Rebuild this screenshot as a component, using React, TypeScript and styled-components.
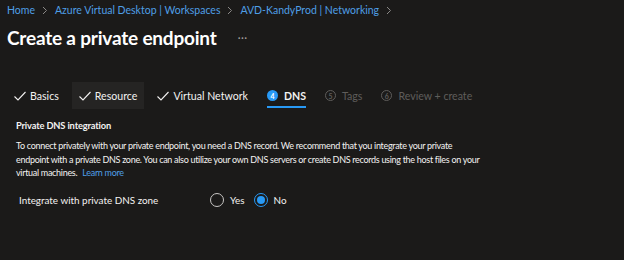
import React from 'react';
import styled, { createGlobalStyle } from 'styled-components';

const GlobalStyle = createGlobalStyle`
  html, body {
    margin: 0;
    padding: 0;
    background: #1b1a19;
  }
  body {
    font-family: Lato, "Noto Sans", sans-serif;
    color: #f3f2f1;
  }
`;

const Page = styled.div`
  width: 624px;
  height: 260px;
  background: #1b1a19;
  overflow: hidden;
`;

const Breadcrumb = styled.nav`
  display: flex;
  align-items: center;
  gap: 6px;
  padding: 2px 0 0 7px;
  height: 16px;
  font-size: 10.5px;
`;

const Crumb = styled.a`
  color: #4f9fe6;
  text-decoration: none;
`;

const Chevron = styled.span`
  display: flex;
  padding: 0 1px;
`;

const TitleRow = styled.div`
  display: flex;
  align-items: center;
  gap: 21px;
  padding: 6px 0 0 7px;
  height: 26px;
`;

const Title = styled.h1`
  margin: 0;
  font-size: 19px;
  font-weight: 700;
  letter-spacing: -0.2px;
  color: #ffffff;
`;

const More = styled.span`
  color: #a19f9d;
  font-size: 11px;
  letter-spacing: 0.5px;
`;

const Tabs = styled.div`
  display: flex;
  align-items: stretch;
  margin-top: 32px;
  padding-left: 7px;
  height: 27px;
`;

const Tab = styled.div<{ $hover?: boolean; $active?: boolean; $disabled?: boolean }>`
  display: flex;
  align-items: center;
  gap: 3px;
  padding: 0 7px 0 6px;
  margin-right: 6px;
  font-size: 10.6px;
  font-weight: ${p => (p.$active ? 700 : 400)};
  color: ${p => (p.$disabled ? '#5f5d5b' : '#f3f2f1')};
  background: ${p => (p.$hover ? '#252423' : 'transparent')};
  position: relative;
  &::after {
    content: "";
    display: ${p => (p.$active ? 'block' : 'none')};
    position: absolute;
    left: 6px;
    right: 7px;
    bottom: 1px;
    height: 2px;
    background: #2899f5;
  }
`;

const StepBadge = styled.span<{ $active?: boolean }>`
  width: 11px;
  height: 11px;
  border-radius: 50%;
  display: inline-flex;
  align-items: center;
  justify-content: center;
  font-size: 7px;
  font-weight: 700;
  box-sizing: border-box;
  color: ${p => (p.$active ? '#ffffff' : '#5f5d5b')};
  background: ${p => (p.$active ? '#2899f5' : 'transparent')};
  border: ${p => (p.$active ? 'none' : '1px solid #5f5d5b')};
  margin-right: 3px;
`;

const Section = styled.section`
  padding: 11px 0 0 16px;
`;

const SectionTitle = styled.h2`
  margin: 0;
  font-size: 9.3px;
  font-weight: 700;
  letter-spacing: -0.15px;
  color: #f3f2f1;
`;

const Description = styled.p`
  margin: 8px 0 0;
  font-size: 9px;
  letter-spacing: -0.3px;
  line-height: 13.5px;
  color: #f3f2f1;
`;

const Line = styled.span`
  display: block;
  white-space: nowrap;
`;

const LearnMore = styled.a`
  color: #4f9fe6;
  text-decoration: none;
  margin-left: 5px;
`;

const FieldRow = styled.div`
  display: flex;
  align-items: center;
  margin-top: 13px;
  padding-left: 3px;
`;

const FieldLabel = styled.label`
  width: 191px;
  font-size: 9.9px;
  color: #f3f2f1;
`;

const RadioGroup = styled.div`
  display: flex;
  align-items: center;
  gap: 9px;
`;

const RadioOption = styled.label`
  display: flex;
  align-items: center;
  gap: 6px;
  font-size: 9.9px;
  color: #f3f2f1;
`;

const RadioCircle = styled.span<{ $checked?: boolean }>`
  width: 14px;
  height: 14px;
  border-radius: 50%;
  box-sizing: border-box;
  border: 1px solid ${p => (p.$checked ? '#2899f5' : '#c8c6c4')};
  display: inline-flex;
  align-items: center;
  justify-content: center;
  &::after {
    content: "";
    display: ${p => (p.$checked ? 'block' : 'none')};
    width: 8px;
    height: 8px;
    border-radius: 50%;
    background: #2899f5;
  }
`;

const Check = () => (
  <svg width="14" height="14" viewBox="0 0 14 14" fill="none">
    <path d="M1.5 7.5 L5 11 L12.5 3" stroke="#f3f2f1" strokeWidth="1.1" />
  </svg>
);

const ChevronIcon = () => (
  <svg width="6" height="9" viewBox="0 0 6 9" fill="none">
    <path d="M1 1 L4.5 4.5 L1 8" stroke="#8a8886" strokeWidth="1" />
  </svg>
);

export default function App() {
  return (
    <Page>
      <GlobalStyle />
      <Breadcrumb>
        <Crumb>Home</Crumb>
        <Chevron><ChevronIcon /></Chevron>
        <Crumb>Azure Virtual Desktop | Workspaces</Crumb>
        <Chevron><ChevronIcon /></Chevron>
        <Crumb>AVD-KandyProd | Networking</Crumb>
        <Chevron><ChevronIcon /></Chevron>
      </Breadcrumb>
      <TitleRow>
        <Title>Create a private endpoint</Title>
        <More>···</More>
      </TitleRow>
      <Tabs>
        <Tab><Check />Basics</Tab>
        <Tab $hover><Check />Resource</Tab>
        <Tab><Check />Virtual Network</Tab>
        <Tab $active><StepBadge $active>4</StepBadge>DNS</Tab>
        <Tab $disabled><StepBadge>5</StepBadge>Tags</Tab>
        <Tab $disabled><StepBadge>6</StepBadge>Review + create</Tab>
      </Tabs>
      <Section>
        <SectionTitle>Private DNS integration</SectionTitle>
        <Description>
          <Line>To connect privately with your private endpoint, you need a DNS record. We recommend that you integrate your private</Line>
          <Line>endpoint with a private DNS zone. You can also utilize your own DNS servers or create DNS records using the host files on your</Line>
          <Line>
            virtual machines.
            <LearnMore>Learn more</LearnMore>
          </Line>
        </Description>
        <FieldRow>
          <FieldLabel>Integrate with private DNS zone</FieldLabel>
          <RadioGroup>
            <RadioOption><RadioCircle />Yes</RadioOption>
            <RadioOption><RadioCircle $checked />No</RadioOption>
          </RadioGroup>
        </FieldRow>
      </Section>
    </Page>
  );
}
